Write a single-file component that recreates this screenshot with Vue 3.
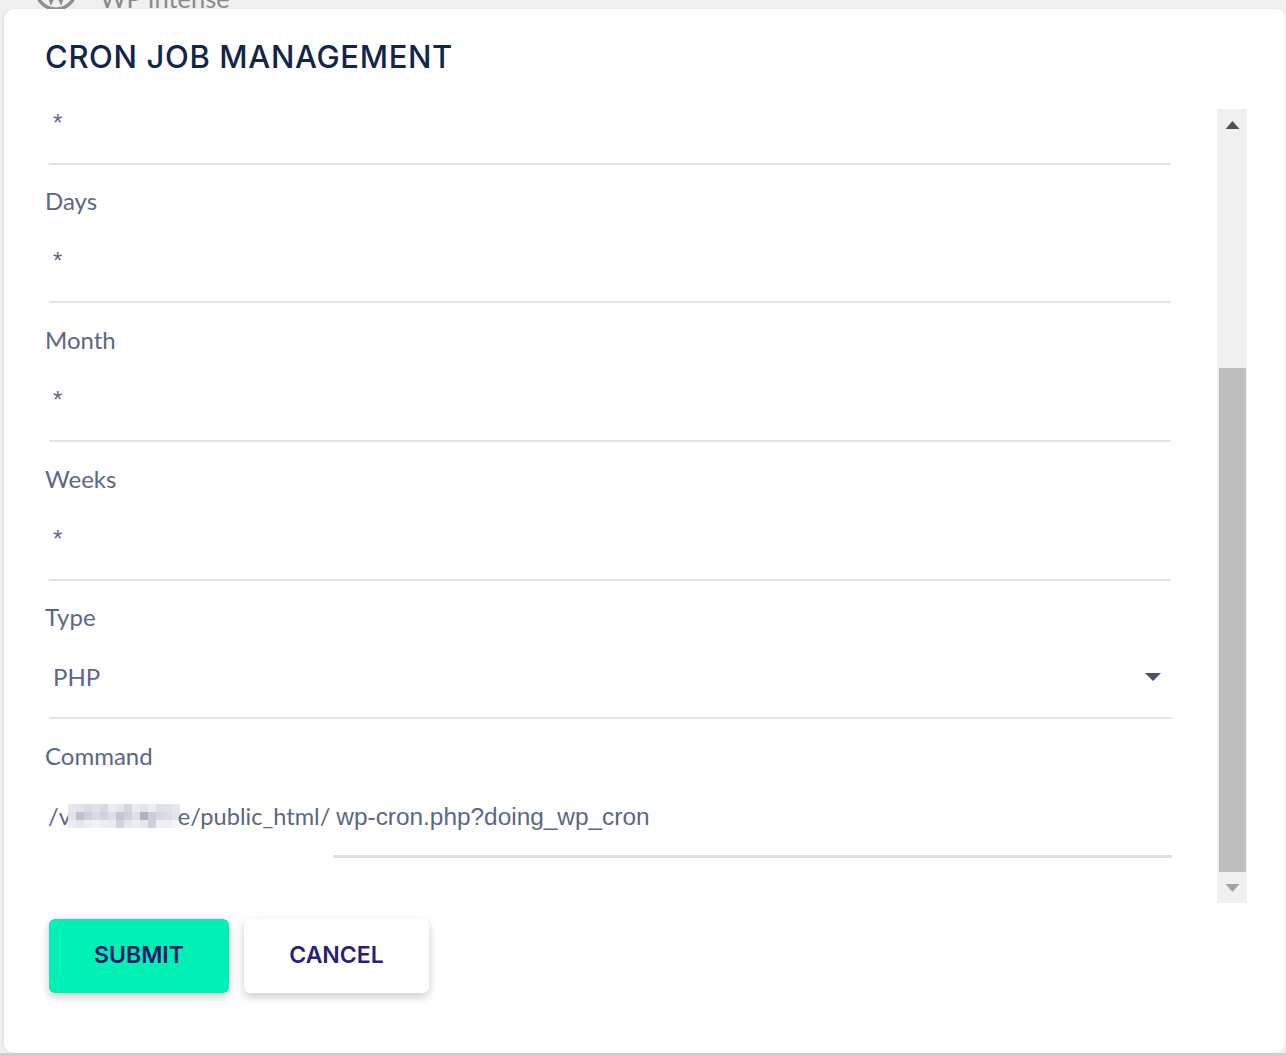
<script setup>
const fields = [
  { label: 'Days', value: '*' },
  { label: 'Month', value: '*' },
  { label: 'Weeks', value: '*' },
]
const pixels = [
  '#e6e7ec','#e2e4ea','#d8dbe2','#e0e2e8','#d6d9e1','#ebedf1','#e3e5ea','#d2d6de','#e9ebef','#e2e4ea','#edeef2','#dcdfe5','#e0e2e8','#e5e7ec',
  '#e2e4ea','#bcc1cd','#ccd0d9','#d8dbe2','#d0d4dc','#dcdfe5','#c3c7d2','#ced1da','#e0e2e8','#aeb3c1','#cbced8','#d4d7df','#dadde3','#e2e4ea',
  '#ebedf1','#e5e7ec','#edeef2','#f1f2f5','#edeef2','#e9ebef','#d0d4dc','#e5e7ec','#edeef2','#e5e7ec','#ced1da','#f0f1f4','#edeef2','#f4f5f7',
]
</script>

<template>
  <div class="page">
    <div class="backdrop">
      <svg class="wp-logo" viewBox="0 0 44 44" aria-hidden="true">
        <circle cx="22" cy="22" r="20" fill="none" stroke="#8f8f8f" stroke-width="3.5" />
        <path d="M9 18 L17 39 L22 27 L27 39 L35 18 Z" fill="#8f8f8f" />
      </svg>
      <span class="brand">WP Intense</span>
    </div>
    <main class="card">
      <h1 class="title">CRON JOB MANAGEMENT</h1>
      <div class="body">
        <div class="form">
          <div class="control first"><span class="value">*</span></div>
          <div v-for="f in fields" :key="f.label" class="field">
            <label class="label">{{ f.label }}</label>
            <div class="control"><span class="value">{{ f.value }}</span></div>
          </div>
          <div class="field">
            <label class="label">Type</label>
            <div class="control select">
              <span class="value text">PHP</span>
              <svg class="caret" viewBox="0 0 16 8" aria-hidden="true"><path d="M0 0H16L8 8Z" fill="#46526f" /></svg>
            </div>
          </div>
          <div class="field">
            <label class="label">Command</label>
            <div class="command">
              <span class="prefix">/v<span class="pixels"><i v-for="(c, i) in pixels" :key="i" :style="{ background: c }"></i></span>e/public_html/</span>
              <span class="command-input">wp-cron.php?doing_wp_cron</span>
            </div>
          </div>
        </div>
        <div class="scrollbar">
          <div class="arrow"><svg viewBox="0 0 14 8" aria-hidden="true"><path d="M7 0L14 8H0Z" fill="#505050" /></svg></div>
          <div class="track"></div>
          <div class="thumb"></div>
          <div class="arrow"><svg viewBox="0 0 14 8" aria-hidden="true"><path d="M0 0H14L7 8Z" fill="#a3a3a3" /></svg></div>
        </div>
      </div>
      <div class="actions">
        <button class="btn primary" type="button">SUBMIT</button>
        <button class="btn" type="button">CANCEL</button>
      </div>
    </main>
  </div>
</template>

<style>
body { background: #d0d0d0; }
</style>

<style scoped>
.page {
  width: 1286px;
  height: 1056px;
  overflow: hidden;
  background: linear-gradient(to bottom, #f0f0f0 1053px, #cfcfcf 1053px);
  font-family: Lato, "Liberation Sans", sans-serif;
  color: #5b6784;
}
.backdrop {
  height: 9px;
  overflow: hidden;
  display: flex;
  align-items: flex-end;
  padding-left: 34px;
  gap: 22px;
}
.wp-logo { width: 44px; height: 44px; flex: none; margin-bottom: -2px; }
.brand {
  font-size: 25.5px;
  line-height: 24px;
  color: #8a8a8a;
  margin-bottom: -1px;
  white-space: nowrap;
}
.card {
  box-sizing: border-box;
  margin-left: 4px;
  width: 1281px;
  height: 1044px;
  background: #fff;
  border-radius: 10px;
  padding: 29px 38px 0 41px;
  box-shadow: -2px 0 3px rgba(0, 0, 0, 0.05);
}
.title {
  margin: 0;
  height: 39px;
  font-family: Inter, Lato, sans-serif;
  font-size: 31px;
  line-height: 38px;
  font-weight: 500;
  letter-spacing: 0.65px;
  color: #12254d;
  white-space: nowrap;
}
.body {
  display: flex;
  margin-top: 32px;
  height: 794px;
}
.form { width: 1126px; flex: none; }
.control {
  box-sizing: border-box;
  margin-left: 4px;
  height: 80px;
  border-bottom: 2px solid #e4e4e4;
  padding-left: 4px;
  display: flex;
  align-items: center;
}
.control.first { height: 56px; padding-bottom: 25px; }
.control.select { justify-content: space-between; margin-right: -1px; padding-right: 11px; }
.field { height: 138.75px; padding-top: 17px; box-sizing: border-box; }
.label {
  display: block;
  font-size: 24px;
  line-height: 38px;
  height: 41px;
  color: #5b6784;
}
.value {
  font-family: "Liberation Sans", sans-serif;
  font-size: 24px;
  line-height: 30px;
  margin-top: -2px;
}
.value.text { font-family: Lato, sans-serif; margin-top: -2px; }
.caret { width: 16px; height: 8px; margin-top: -2px; }
.command { display: flex; align-items: flex-start; height: 80px; }
.prefix {
  margin-left: 3px;
  font-size: 23.6px;
  line-height: 40px;
  margin-top: 18px;
  white-space: nowrap;
  display: flex;
  align-items: center;
}
.pixels {
  width: 112px;
  height: 24px;
  display: grid;
  grid-template-columns: repeat(14, 8px);
  grid-auto-rows: 8px;
  margin-left: -3px;
  margin-right: -2px;
}
.pixels i { display: block; }
.command-input {
  flex: 1;
  margin-left: 3px;
  margin-right: -1px;
  padding-left: 3px;
  height: 80px;
  box-sizing: border-box;
  padding-top: 19px;
  font-family: "Liberation Sans", sans-serif;
  font-size: 24.4px;
  line-height: 40px;
  border-bottom: 3px solid #e0e0e0;
  white-space: nowrap;
}
.scrollbar {
  box-sizing: border-box;
  margin-left: 46px;
  width: 31px;
  background: #f0f0f0;
  display: flex;
  flex-direction: column;
  align-items: center;
}
.arrow { height: 31px; width: 100%; display: flex; align-items: center; justify-content: center; flex: none; }
.arrow svg { width: 15px; height: 8px; }
.track { flex: 1; }
.thumb { width: 27px; height: 504px; background: #bebebe; flex: none; }
.actions { display: flex; gap: 15px; margin-top: 16px; margin-left: 4px; }
.btn {
  height: 74px;
  width: 180px;
  border: 0;
  border-radius: 6px;
  background: #00f0b5;
  color: #1d1868;
  font: 600 23px Inter, Lato, sans-serif;
  box-shadow: 0 4px 10px rgba(0, 0, 0, 0.2);
  padding: 0 0 2px;
}
.btn:not(.primary) { width: 185px; background: #fff; color: #2b1f7a; }
</style>
